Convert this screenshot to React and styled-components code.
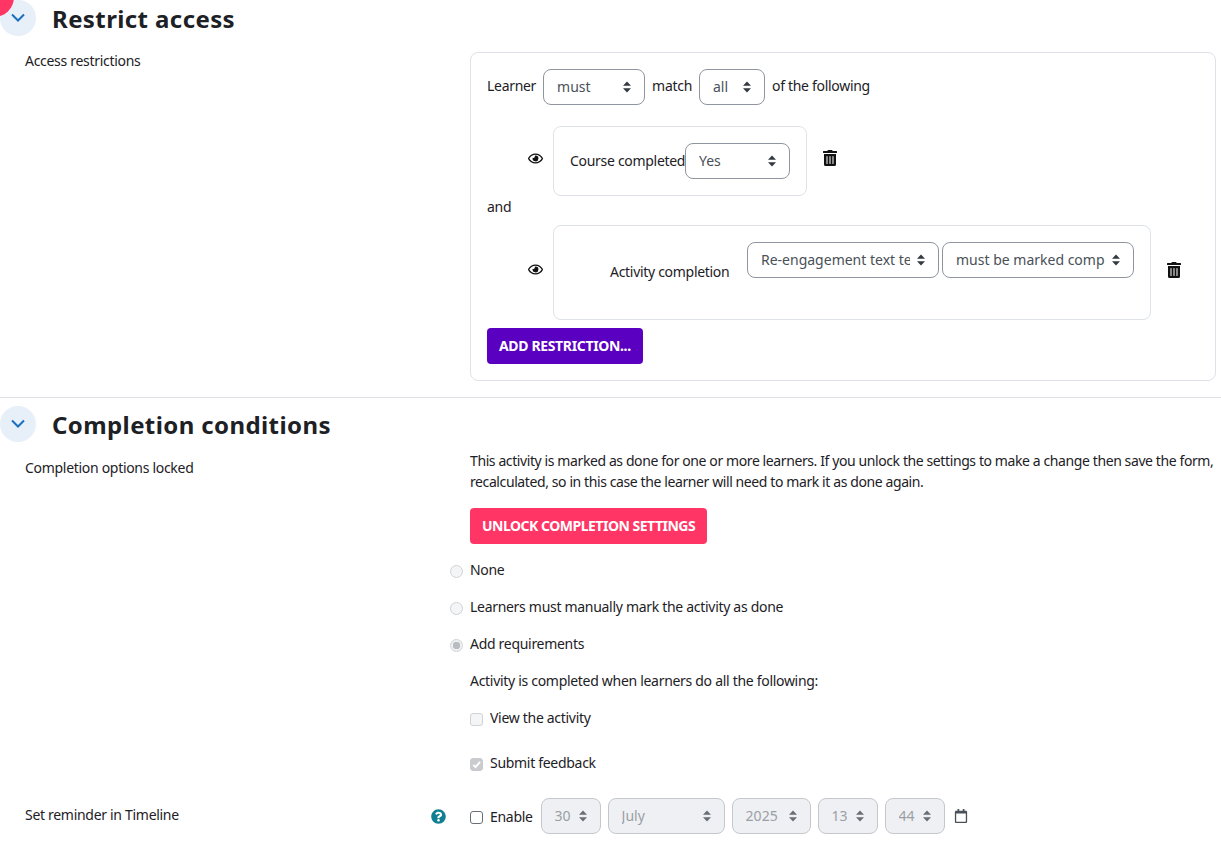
import React from "react";
import styled, { createGlobalStyle } from "styled-components";
import { FaRegEye, FaTrashAlt, FaQuestionCircle, FaRegCalendar } from "react-icons/fa";

const caretSvg = (fill) =>
  `url("data:image/svg+xml,%3Csvg xmlns='http://www.w3.org/2000/svg' viewBox='0 0 8 12'%3E%3Cpath fill='%23${fill}' d='M4 0.5 8 4.8H0zM4 11.5 0 7.2H8z'/%3E%3C/svg%3E")`;
const check = `url("data:image/svg+xml,%3Csvg xmlns='http://www.w3.org/2000/svg' viewBox='0 0 20 20'%3E%3Cpath fill='none' stroke='%23fff' stroke-width='3' d='M5 10.5l3.5 3.5 7-8'/%3E%3C/svg%3E")`;

const Global = createGlobalStyle`
  html, body { margin: 0; height: 844px; overflow: hidden; background: #fff; }
  body {
    font-family: "Noto Sans", "Liberation Sans", sans-serif;
    font-size: 14px;
    line-height: 21px;
    letter-spacing: -0.3px;
    color: #1d2125;
  }
`;

const Page = styled.div`
  position: relative;
  width: 1221px;
  height: 844px;
  overflow: hidden;
`;

const Blob = styled.div`
  position: absolute;
  left: -26px;
  top: -23px;
  width: 40px;
  height: 40px;
  border-radius: 50%;
  background: #ff3565;
`;

const Header = styled.div`
  display: flex;
  align-items: center;
  gap: 16px;
  height: 36px;
`;

const Toggle = styled.div`
  width: 36px;
  height: 36px;
  border-radius: 50%;
  background: #e7eff8;
  display: flex;
  align-items: center;
  justify-content: center;
  color: #1a6fc0;
`;

const Title = styled.h3`
  margin: 1px 0 0;
  font-size: 24px;
  line-height: 30px;
  font-weight: 700;
  letter-spacing: 0.4px;
`;

const Row = styled.div`
  display: grid;
  grid-template-columns: 470px 1fr;
  margin-top: ${(p) => p.$mt || 0}px;
`;

const Label = styled.div`
  padding: ${(p) => p.$top || 0}px 0 0 25px;
  position: relative;
`;

const Divider = styled.hr`
  border: 0;
  border-top: 1px solid #dee2e6;
  margin: 16px 0 8px;
`;

const RestrictBox = styled.div`
  box-sizing: border-box;
  margin-top: 2px;
  width: 746px;
  height: 329px;
  border: 1px solid #dee2e6;
  border-radius: 8px;
  padding: 16px;
`;

const Line = styled.div`
  display: flex;
  align-items: center;
  gap: 7px;
`;

const Word = styled.span`
  padding-bottom: 3px;
`;

const Select = styled.select`
  appearance: none;
  box-sizing: border-box;
  width: ${(p) => p.$w}px;
  height: 36px;
  flex: none;
  padding: 0 28px 2px 13px;
  border: 1px solid ${(p) => (p.disabled ? "#c4c7cc" : "#8f959e")};
  border-radius: 8px;
  font: inherit;
  color: ${(p) => (p.disabled ? "#9a9fa6" : "#495057")};
  opacity: 1;
  background: ${(p) => (p.disabled ? "#eff0f3" : "#fff")} ${(p) => caretSvg(p.disabled ? "6a6f76" : "343a40")} no-repeat right 13px center / 8px 12px;
`;

const Condition = styled.div`
  display: flex;
  align-items: center;
  margin: ${(p) => p.$m};
`;

const EyeSlot = styled.div`
  width: 66px;
  flex: none;
  display: flex;
  justify-content: flex-end;
  padding: 0 10px 6px 0;
  box-sizing: border-box;
  color: #111;
  font-size: 15px;
  line-height: 0;
`;

const CondCard = styled.div`
  box-sizing: border-box;
  width: ${(p) => p.$w}px;
  height: ${(p) => p.$h}px;
  border: 1px solid #dee2e6;
  border-radius: 8px;
  padding: 16px 16px 0 ${(p) => p.$pl}px;
  display: flex;
  align-items: flex-start;
  gap: ${(p) => p.$gap || 0}px;
`;

const CondLabel = styled.span`
  flex: none;
  width: ${(p) => p.$w}px;
  line-height: 36px;
  white-space: nowrap;
  margin-top: ${(p) => p.$mt || 0}px;
`;

const AndLabel = styled.div`
  color: #1d2125;
`;

const Trash = styled.div`
  margin-left: 15px;
  padding-bottom: 6px;
  color: #111;
  font-size: 16px;
  line-height: 0;
`;

const ActionButton = styled.button`
  display: block;
  height: 36px;
  border: 0;
  border-radius: 4px;
  background: ${(p) => p.$bg};
  color: #fff;
  font: inherit;
  font-weight: 700;
  padding: 0 12px 1px;
  text-transform: uppercase;
  white-space: nowrap;
  letter-spacing: ${(p) => p.$ls}px;
`;

const Copy = styled.p`
  margin: 0 0 16px;
  white-space: nowrap;
  letter-spacing: -0.4px;
`;

const Radios = styled.div`
  margin: 15px 0 0 -20px;
  display: flex;
  flex-direction: column;
  gap: 16px;
`;

const RadioRow = styled.label`
  display: flex;
  align-items: flex-start;
  gap: 7px;
`;

const Radio = styled.input.attrs({ type: "radio", disabled: true })`
  appearance: none;
  box-sizing: border-box;
  width: 13px;
  height: 13px;
  margin: 6px 0 0;
  border: 1px solid #cfd2d6;
  border-radius: 50%;
  background: #f4f5f6;
  &:checked {
    background: radial-gradient(circle, #b9bcc0 0 3.5px, #f0f1f2 4px);
  }
`;

const Note = styled.div`
  margin-top: 16px;
`;

const CheckRow = styled.label`
  display: flex;
  align-items: flex-start;
  gap: 7px;
  margin-top: ${(p) => p.$mt}px;
`;

const Check = styled.input.attrs({ type: "checkbox" })`
  appearance: none;
  box-sizing: border-box;
  flex: none;
  width: 13px;
  height: 13px;
  margin: ${(p) => p.$top}px 0 0;
  border: 1px solid ${(p) => (p.disabled ? "#cfd2d6" : "#6a6f76")};
  border-radius: 3px;
  background: ${(p) => (p.disabled ? "#f4f5f6" : "#fff")};
  &:checked {
    border-color: #c9cbcf;
    background: #c9cbcf ${check} center / 13px no-repeat;
  }
`;

const HelpIcon = styled.div`
  position: absolute;
  left: 431px;
  top: 11px;
  color: #0f7f91;
  font-size: 15px;
  line-height: 0;
`;

const DateLine = styled.div`
  display: flex;
  align-items: center;
  gap: 7px;
`;

const EnableText = styled.span`
  margin-right: 1px;
`;

const CalendarIcon = styled.div`
  margin-left: 2px;
  color: #495057;
  font-size: 14px;
  line-height: 0;
`;

const Chevron = () => (
  <svg width="16" height="10" viewBox="0 0 16 10" fill="none" stroke="currentColor" strokeWidth="2">
    <path d="M2 1.5 8 7.5 14 1.5" />
  </svg>
);

const Pick = ({ w, value, disabled }) => (
  <Select $w={w} disabled={disabled} defaultValue={value}>
    <option>{value}</option>
  </Select>
);

const App = () => (
  <Page>
    <Global />
    <Blob />
    <Header>
      <Toggle><Chevron /></Toggle>
      <Title>Restrict access</Title>
    </Header>
    <Row $mt={14}>
      <Label>Access restrictions</Label>
      <RestrictBox>
        <Line>
          <Word>Learner</Word>
          <Pick w={102} value="must" />
          <Word>match</Word>
          <Pick w={66} value="all" />
          <Word>of the following</Word>
        </Line>
        <Condition $m="21px 0 0">
          <EyeSlot><FaRegEye /></EyeSlot>
          <CondCard $w={254} $h={70} $pl={16}>
            <CondLabel $w={115}>Course completed</CondLabel>
            <Pick w={105} value="Yes" />
          </CondCard>
          <Trash><FaTrashAlt /></Trash>
        </Condition>
        <AndLabel>and</AndLabel>
        <Condition $m="8px 0 8px">
          <EyeSlot><FaRegEye /></EyeSlot>
          <CondCard $w={598} $h={95} $pl={56} $gap={3}>
            <CondLabel $w={134} $mt={12}>Activity completion</CondLabel>
            <Pick w={192} value="Re-engagement text test" />
            <Pick w={192} value="must be marked complete" />
          </CondCard>
          <Trash><FaTrashAlt /></Trash>
        </Condition>
        <ActionButton $bg="#5a00c0" $ls={-0.35}>Add restriction...</ActionButton>
      </RestrictBox>
    </Row>
    <Divider />
    <Header>
      <Toggle><Chevron /></Toggle>
      <Title>Completion conditions</Title>
    </Header>
    <Row $mt={8}>
      <Label $top={7}>Completion options locked</Label>
      <div>
        <Copy>
          This activity is marked as done for one or more learners. If you unlock the settings to make a change then save the form,
          <br />
          recalculated, so in this case the learner will need to mark it as done again.
        </Copy>
        <ActionButton $bg="#ff3565" $ls={-0.5}>Unlock completion settings</ActionButton>
        <Radios>
          <RadioRow><Radio />None</RadioRow>
          <RadioRow><Radio />Learners must manually mark the activity as done</RadioRow>
          <RadioRow><Radio defaultChecked />Add requirements</RadioRow>
        </Radios>
        <Note>Activity is completed when learners do all the following:</Note>
        <CheckRow $mt={16}><Check $top={6} disabled />View the activity</CheckRow>
        <CheckRow $mt={24}><Check $top={6} disabled defaultChecked />Submit feedback</CheckRow>
      </div>
    </Row>
    <Row $mt={25}>
      <Label $top={6}>
        Set reminder in Timeline
        <HelpIcon><FaQuestionCircle /></HelpIcon>
      </Label>
      <DateLine>
        <Check $top={2} />
        <EnableText>Enable</EnableText>
        <Pick w={60} value="30" disabled />
        <Pick w={117} value="July" disabled />
        <Pick w={79} value="2025" disabled />
        <Pick w={60} value="13" disabled />
        <Pick w={60} value="44" disabled />
        <CalendarIcon><FaRegCalendar /></CalendarIcon>
      </DateLine>
    </Row>
  </Page>
);

export default App;
